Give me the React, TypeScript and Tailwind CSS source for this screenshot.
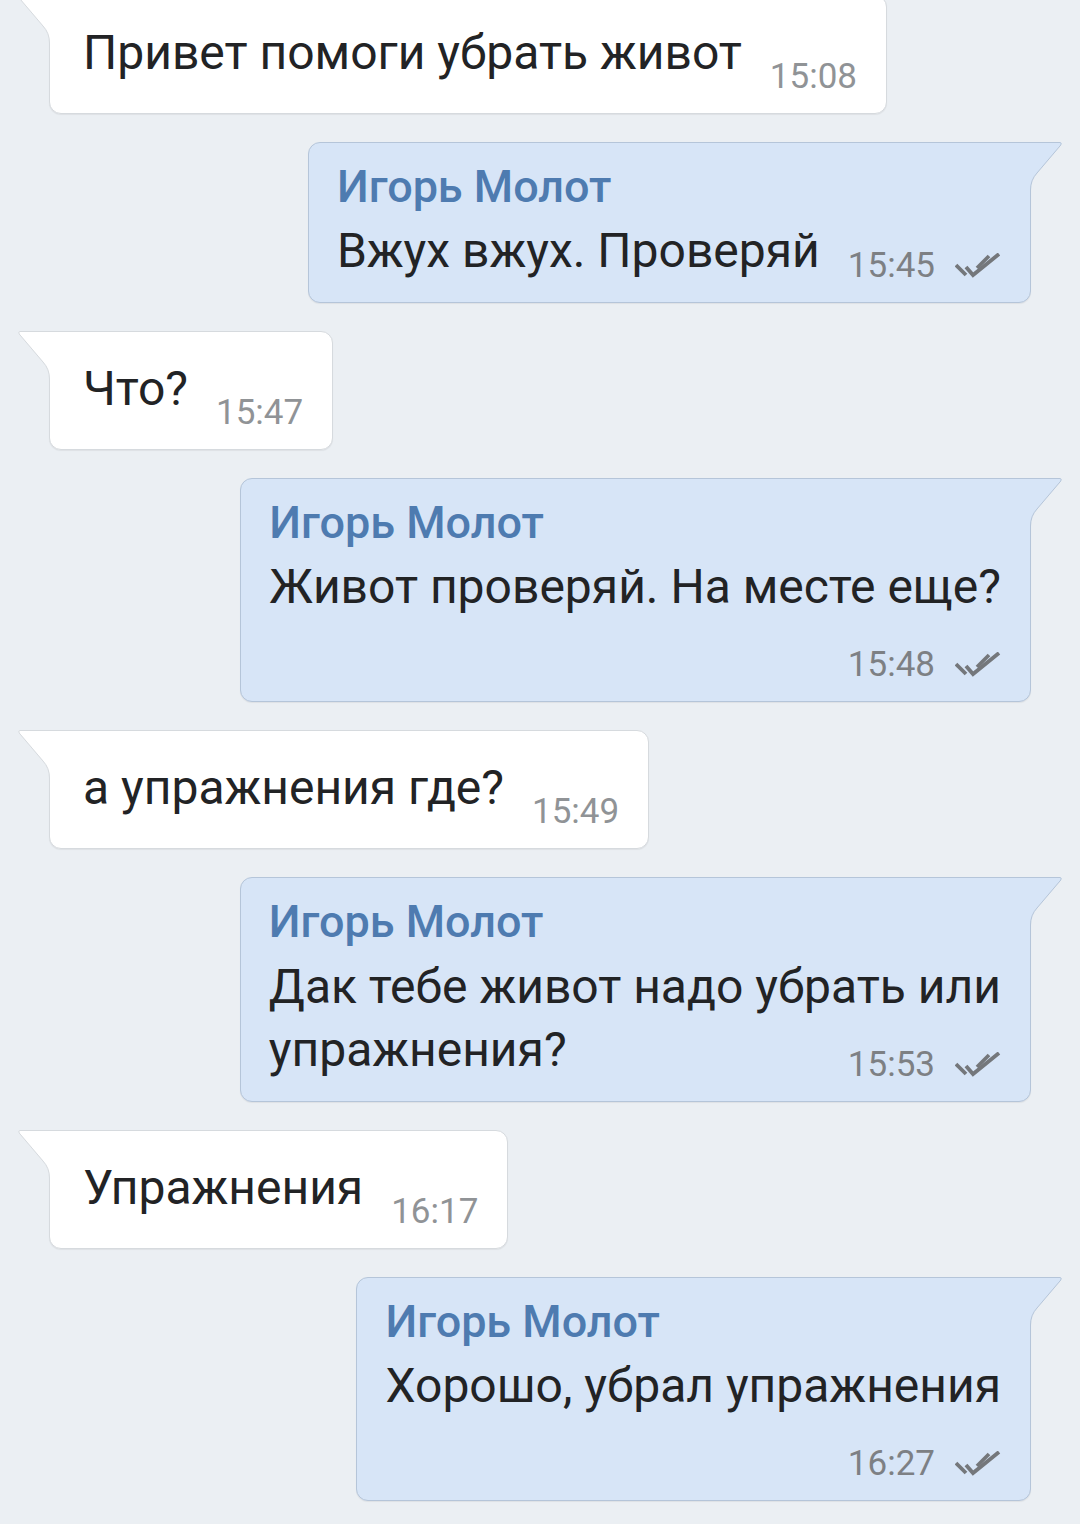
type Msg = {
  out: boolean;
  lines: string[];
  time: string;
  metaBelow?: boolean;
};

const messages: Msg[] = [
  { out: false, lines: ["Привет помоги убрать живот"], time: "15:08" },
  { out: true, lines: ["Вжух вжух. Проверяй"], time: "15:45" },
  { out: false, lines: ["Что?"], time: "15:47" },
  { out: true, lines: ["Живот проверяй. На месте еще?"], time: "15:48", metaBelow: true },
  { out: false, lines: ["а упражнения где?"], time: "15:49" },
  { out: true, lines: ["Дак тебе живот надо убрать или", "упражнения?"], time: "15:53" },
  { out: false, lines: ["Упражнения"], time: "16:17" },
  { out: true, lines: ["Хорошо, убрал упражнения"], time: "16:27", metaBelow: true },
];

function Tail({ side }: { side: "left" | "right" }) {
  if (side === "left") {
    return (
      <svg
        width="34"
        height="48"
        viewBox="0 0 34 48"
        className="absolute top-[-1px] left-[-32px]"
      >
        <path d="M2 0.5 L34 0.5 L34 48 L31.5 48 Q31.5 38 25 31 L1.2 3 Q0 0.5 2 0.5 Z" fill="#ffffff" />
        <path
          d="M31.5 48 Q31.5 38 25 31 L1.2 3 Q0 0.5 2 0.5 L34 0.5"
          fill="none"
          stroke="#d6dade"
          strokeWidth="1"
        />
      </svg>
    );
  }
  return (
    <svg
      width="34"
      height="48"
      viewBox="0 0 34 48"
      className="absolute top-[-1px] right-[-32px]"
    >
      <path d="M32 0.5 L0 0.5 L0 48 L2.5 48 Q2.5 38 9 31 L32.8 3 Q34 0.5 32 0.5 Z" fill="#d7e5f7" />
      <path
        d="M2.5 48 Q2.5 38 9 31 L32.8 3 Q34 0.5 32 0.5 L0 0.5"
        fill="none"
        stroke="#b5c5d9"
        strokeWidth="1"
      />
    </svg>
  );
}

function DoubleCheck() {
  return (
    <svg width="46" height="26" viewBox="0 0 46 26" className="ml-[20px] shrink-0">
      <g fill="none" stroke="#74777b" strokeWidth="3.8">
        <path d="M1 12 L11 22" />
        <path d="M11 14 L18 22 L44 1" />
        <path d="M22 15 L34 3" />
      </g>
    </svg>
  );
}

function Meta({ time, out }: { time: string; out: boolean }) {
  return (
    <div className="flex items-center shrink-0">
      <span
        className={
          out
            ? "text-[35px] leading-[40px] text-[#7d8084]"
            : "text-[35px] leading-[40px] text-[#909396]"
        }
      >
        {time}
      </span>
      {out && <DoubleCheck />}
    </div>
  );
}

function Incoming({ msg, first }: { msg: Msg; first: boolean }) {
  return (
    <div className={first ? "flex justify-start pl-[49px] -mt-[5px]" : "flex justify-start pl-[49px]"}>
      <div className="relative rounded-[12px] rounded-tl-none bg-white border border-[#d6dade] shadow-[0_1px_1px_rgba(0,0,0,0.06)] pl-[33px] pr-[29px] pt-[26px] pb-[16px]">
        <Tail side="left" />
        <div className="flex items-end gap-[28px]">
          <span className="text-[48px] leading-[62px] mb-[13px] text-[#222325] whitespace-nowrap">
            {msg.lines[0]}
          </span>
          <Meta time={msg.time} out={false} />
        </div>
      </div>
    </div>
  );
}

function Outgoing({ msg }: { msg: Msg }) {
  const head = msg.lines.slice(0, -1);
  const last = msg.lines[msg.lines.length - 1];

  return (
    <div className="flex justify-end pr-[49px]">
      <div className="relative rounded-[12px] rounded-tr-none bg-[#d7e5f7] border border-[#b5c5d9] shadow-[0_1px_1px_rgba(0,0,0,0.06)] pl-[28px] pr-[29px] pt-[20px] pb-[16px]">
        <Tail side="right" />
        <div className="text-[45px] leading-[48px] font-medium text-[#4e7bb0] mb-[9px] whitespace-nowrap">
          Игорь Молот
        </div>
        {head.map((line) => (
          <div key={line} className="text-[48px] leading-[64px] text-[#222325] whitespace-nowrap">
            {line}
          </div>
        ))}
        {msg.metaBelow ? (
          <>
            <div className="text-[48px] leading-[62px] text-[#222325] whitespace-nowrap">{last}</div>
            <div className="flex justify-end mt-[27px]">
              <Meta time={msg.time} out />
            </div>
          </>
        ) : (
          <div className="flex items-end gap-[28px]">
            <span className="text-[48px] leading-[62px] mb-[4px] text-[#222325] whitespace-nowrap">
              {last}
            </span>
            <div className="ml-auto">
              <Meta time={msg.time} out />
            </div>
          </div>
        )}
      </div>
    </div>
  );
}

export default function App() {
  return (
    <div className="h-[1524px] overflow-hidden bg-[#ebeff3] font-['Roboto',sans-serif]">
      <div className="flex flex-col gap-[28px]">
        {messages.map((msg, i) =>
          msg.out ? (
            <Outgoing key={i} msg={msg} />
          ) : (
            <Incoming key={i} msg={msg} first={i === 0} />
          )
        )}
      </div>
    </div>
  );
}
